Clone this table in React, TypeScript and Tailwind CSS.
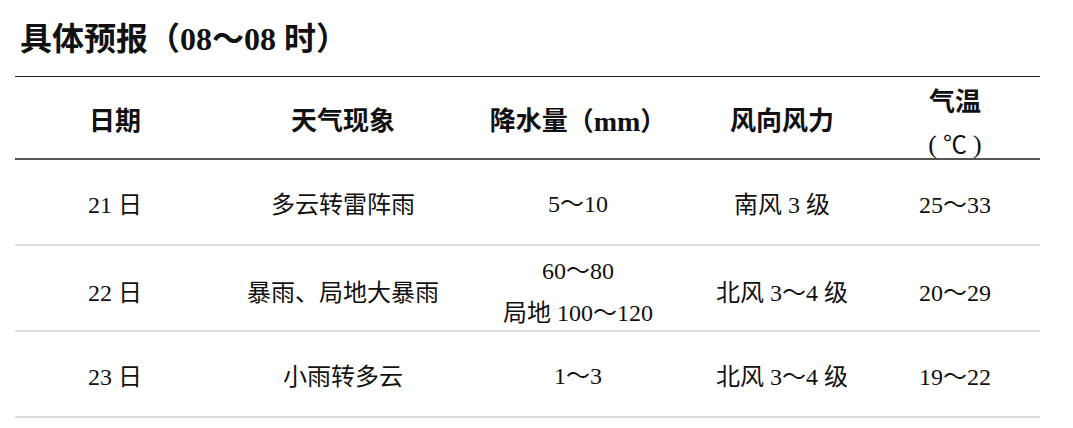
import React from "react";

const FONT = "font-['Liberation_Serif','Noto_Sans_CJK_SC',serif]";

type Row = {
  date: string;
  weather: string;
  rain: string[];
  wind: string;
  temp: string;
};

const rows: Row[] = [
  { date: "21 日", weather: "多云转雷阵雨", rain: ["5～10"], wind: "南风 3 级", temp: "25～33" },
  {
    date: "22 日",
    weather: "暴雨、局地大暴雨",
    rain: ["60～80", "局地 100～120"],
    wind: "北风 3～4 级",
    temp: "20～29",
  },
  { date: "23 日", weather: "小雨转多云", rain: ["1～3"], wind: "北风 3～4 级", temp: "19～22" },
];

// column widths add up to the table width (1025px)
const cols = "grid grid-cols-[200px_256px_214px_194px_161px]";

export default function App() {
  return (
    <div className={`w-[1073px] h-[428px] bg-white text-[#111] ${FONT}`}>
      {/* 标题 */}
      <div className="h-[76px] flex items-center pl-[20px] pt-[2px]">
        <h1 className="text-[32px] font-bold">具体预报（08～08 时）</h1>
      </div>

      <div className="ml-[15px] w-[1025px] border-t border-[#222]">
        {/* 表头 */}
        <div className={`${cols} h-[83px] border-b-2 border-[#555] text-[26px] font-bold`}>
          <div className="flex items-center justify-center">日期</div>
          <div className="flex items-center justify-center">天气现象</div>
          <div className="flex items-center justify-center">
            降水量（<span className="text-[28px]">mm</span>）
          </div>
          <div className="flex items-center justify-center">风向风力</div>
          <div className="flex flex-col items-center justify-center leading-[42px] pr-[9px] pt-[5px]">
            <span>气温</span>
            <span className="flex items-center gap-[6px] font-normal text-[24px]">
              <span className="text-[26px]">(</span>
              <span>℃</span>
              <span className="text-[26px]">)</span>
            </span>
          </div>
        </div>

        {/* 数据行 */}
        {rows.map((r) => (
          <div key={r.date} className={`${cols} h-[86px] border-b-2 border-[#ddd] text-[24px]`}>
            <div className="flex items-center justify-center pt-[6px]">{r.date}</div>
            <div className="flex items-center justify-center pt-[6px]">{r.weather}</div>
            <div className="flex flex-col items-center justify-center leading-[42px] pt-[4px]">
              {r.rain.map((t) => (
                <span key={t}>{t}</span>
              ))}
            </div>
            <div className="flex items-center justify-center pt-[6px]">{r.wind}</div>
            <div className="flex items-center justify-center pt-[6px] pr-[9px]">{r.temp}</div>
          </div>
        ))}
      </div>
    </div>
  );
}
